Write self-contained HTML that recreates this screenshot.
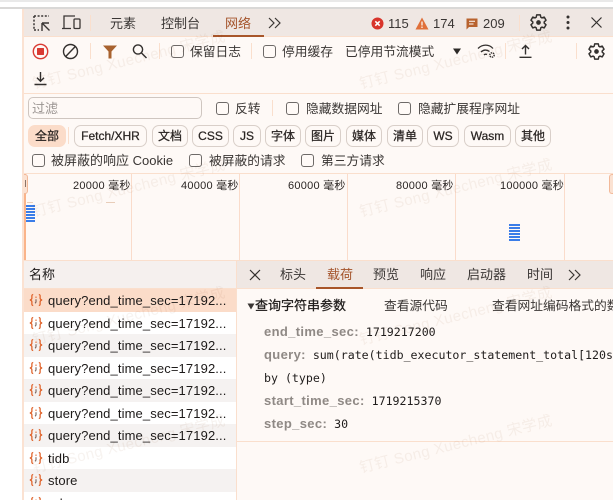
<!DOCTYPE html>
<html style="overflow:hidden"><head><meta charset="utf-8">
<style>
html,body{margin:0;padding:0;background:#fff}
body{width:613px;height:500px;overflow:hidden;position:relative;font-family:"Liberation Sans","Noto Sans CJK SC",sans-serif;color:#2a2523;font-size:13px}
.a{position:absolute;white-space:nowrap}
.t{position:absolute;white-space:nowrap;line-height:16px}
.cb{position:absolute;width:11px;height:11px;border:1px solid #6e6a68;border-radius:3px;background:#fffaf7}
.chip{position:absolute;top:125px;height:20px;border:1px solid #d9cfc9;border-radius:7px;line-height:20px;text-align:center;font-size:12px;color:#2a2523;-webkit-text-stroke:.25px #2a2523}
.ln{position:absolute;background:#fadfcd}
.vl{position:absolute;width:1px;top:174px;height:86px;background:#fadccb}
.row{position:absolute;left:24px;width:212px;height:22.5px}
.row span{position:absolute;left:24px;top:4px;line-height:16px;font-size:13px;color:#1d1a19;letter-spacing:.12px}
.row svg{position:absolute;left:5px;top:4px}
.k{position:absolute;white-space:nowrap;font-family:"DejaVu Sans Mono",monospace;font-size:11.6px;line-height:16px;color:#1f1c1b}
.k b{color:#8f8985;font-family:"Liberation Sans",sans-serif;font-size:13px;letter-spacing:.35px}
.wm{position:absolute;white-space:nowrap;font-size:15px;line-height:18px;color:#f7f3f0;transform:rotate(-14deg);transform-origin:left center;letter-spacing:.4px;mix-blend-mode:multiply}
.bar{position:absolute;background:#3b7de8;height:2px}
.g{fill:none;stroke:#33302e;stroke-width:1.4;stroke-linejoin:round}
.lb{font-size:11px;letter-spacing:.25px;color:#2a2523;top:178px}
</style></head><body>
<div class="a" style="left:0;top:0;width:613px;height:2px;background:#e9e9e9"></div>
<div class="a" style="left:0;top:7px;width:613px;height:2px;background:#d9d8d7"></div>

<!-- main bg -->
<div class="a" style="left:23px;top:9px;width:590px;height:491px;background:#fef9f6"></div>
<div class="a" style="left:22px;top:9px;width:2px;height:491px;background:#fbe2d2"></div>

<!-- tab bar -->
<div class="a" style="left:24px;top:9px;width:589px;height:27px;background:#efe7e3"></div>
<div class="ln" style="left:24px;top:36px;width:589px;height:1px"></div>
<div class="a" style="left:213px;top:35px;width:51px;height:2px;background:#a8562a"></div>
<svg class="a" style="left:30px;top:12px" width="24" height="22" viewBox="0 0 24 22" fill="none" stroke="#3a3634">
<path d="M4 4h15M4 4v14M4 18h5" stroke-width="1.5" stroke-dasharray="2 1.6"/><path d="M12 11v8M12 11h7M12.5 11.5l7 7" stroke-width="1.4"/></svg>
<svg class="a" style="left:61px;top:13px" width="22" height="20" viewBox="0 0 22 20" fill="none" stroke="#3a3634" stroke-width="1.3">
<path d="M3 15V3h11M1 15.5h9"/><rect x="13" y="6" width="6" height="9.5" rx="1"/></svg>
<div class="ln" style="left:90px;top:15px;width:1px;height:16px"></div>
<div class="t" style="left:110px;top:16px;font-size:13px;color:#3a3634">元素</div>
<div class="t" style="left:161px;top:16px;font-size:13px;color:#3a3634">控制台</div>
<div class="t" style="left:225px;top:16px;font-size:13px;color:#a4532a">网络</div>
<svg class="a" style="left:267px;top:16px" width="16" height="14" viewBox="0 0 16 14" fill="none" stroke="#3a3634" stroke-width="1.2"><path d="M2 2l5 5-5 5M8 2l5 5-5 5"/></svg>

<svg class="a" style="left:371px;top:17px" width="13" height="13" viewBox="0 0 13 13"><circle cx="6.5" cy="6.5" r="6" fill="#d8342b"/><path d="M4.3 4.3l4.4 4.4M8.7 4.3l-4.4 4.4" stroke="#fff" stroke-width="1.5"/></svg>
<div class="t" style="left:388px;top:16px;font-size:13px;color:#3a3634">115</div>
<svg class="a" style="left:415px;top:17px" width="14" height="13" viewBox="0 0 14 13"><path d="M7 .5L13.5 12.5H.5z" fill="#e0703a"/><path d="M7 4.5v4M7 9.5v1.5" stroke="#fff" stroke-width="1.2"/></svg>
<div class="t" style="left:433px;top:16px;font-size:13px;color:#3a3634">174</div>
<svg class="a" style="left:466px;top:18px" width="12" height="12" viewBox="0 0 12 12"><path d="M.5 .5h11v8.5H3L.5 11.5z" fill="#b8632f"/><path d="M3 3.3h6M3 6h4.5" stroke="#fff" stroke-width="1"/></svg>
<div class="t" style="left:483px;top:16px;font-size:13px;color:#3a3634">209</div>
<div class="ln" style="left:519px;top:15px;width:1px;height:16px"></div>
<svg class="a" style="left:530px;top:14px" width="17" height="17" viewBox="0 0 16 16"><polygon class="g" points="5.8,3.07 6.34,.79 9.66,.79 10.2,3.07 11.17,3.63 13.41,2.95 15.08,5.84 13.37,7.44 13.37,8.56 15.08,10.16 13.41,13.05 11.17,12.37 10.2,12.93 9.66,15.21 6.34,15.21 5.8,12.93 4.83,12.37 2.59,13.05 .92,10.16 2.63,8.56 2.63,7.44 .92,5.84 2.59,2.95 4.83,3.63"/><circle cx="8" cy="8" r="2.2" fill="#33302e"/></svg>
<svg class="a" style="left:566px;top:15px" width="4" height="15" viewBox="0 0 4 15" fill="#33302e"><circle cx="2" cy="2" r="1.5"/><circle cx="2" cy="7.5" r="1.5"/><circle cx="2" cy="13" r="1.5"/></svg>
<svg class="a" style="left:590px;top:16px" width="13" height="13" viewBox="0 0 13 13" stroke="#33302e" stroke-width="1.2"><path d="M1.5 1.5l10 10M11.5 1.5l-10 10"/></svg>

<!-- toolbar -->
<svg class="a" style="left:32px;top:43px" width="17" height="17" viewBox="0 0 17 17"><circle cx="8.5" cy="8.5" r="7.2" fill="none" stroke="#d93a32" stroke-width="1.4"/><rect x="5" y="5" width="7" height="7" rx=".6" fill="#d93a32"/></svg>
<svg class="a" style="left:62px;top:43px" width="17" height="17" viewBox="0 0 17 17" fill="none" stroke="#33302e" stroke-width="1.4"><circle cx="8.5" cy="8.5" r="7"/><path d="M3.7 13.5l9.6-10"/></svg>
<div class="ln" style="left:90px;top:43px;width:1px;height:16px"></div>
<svg class="a" style="left:103px;top:45px" width="14" height="14" viewBox="0 0 14 14"><path d="M0 .5h14L8.5 6.5V13.5H5.5V6.5z" fill="#a8622f"/></svg>
<svg class="a" style="left:131px;top:43px" width="17" height="17" viewBox="0 0 17 17" fill="none" stroke="#33302e" stroke-width="1.4"><circle cx="7" cy="6.5" r="4.6"/><path d="M10.5 10l5 5"/></svg>
<div class="ln" style="left:159px;top:43px;width:1px;height:16px"></div>
<div class="cb" style="left:171px;top:45px"></div>
<div class="t" style="left:190px;top:44px;font-size:12.75px;color:#3a3634">保留日志</div>
<div class="ln" style="left:251px;top:43px;width:1px;height:16px"></div>
<div class="cb" style="left:263px;top:45px"></div>
<div class="t" style="left:282px;top:44px;font-size:12.75px;color:#3a3634">停用缓存</div>
<div class="t" style="left:345px;top:44px;font-size:12.75px;color:#3a3634">已停用节流模式</div>
<svg class="a" style="left:452px;top:48px" width="10" height="7" viewBox="0 0 10 7"><path d="M1 .5h8L5 6.5z" fill="#2d2a28"/></svg>
<svg class="a" style="left:477px;top:43px" width="19" height="16" viewBox="0 0 19 16" fill="none" stroke="#33302e" stroke-width="1.3"><path d="M1 5.5c4.5-4.5 11-4.5 15 0M4 9c2.5-2.5 6-2.5 8.5-.5M7 12c1-1 2-1 3-.5"/><circle cx="15" cy="12" r="2.2" stroke-dasharray="1.4 .8" stroke-width="1.4"/></svg>
<div class="ln" style="left:505px;top:43px;width:1px;height:16px"></div>
<svg class="a" style="left:518px;top:44px" width="15" height="15" viewBox="0 0 15 15" fill="none" stroke="#33302e" stroke-width="1.4"><path d="M7.5 10.5V1.5M4 5l3.5-3.5L11 5M1.5 13.3h12"/></svg>
<div class="ln" style="left:576px;top:43px;width:1px;height:16px"></div>
<svg class="a" style="left:588px;top:43px" width="17" height="17" viewBox="0 0 16 16"><polygon class="g" points="5.8,3.07 6.34,.79 9.66,.79 10.2,3.07 11.17,3.63 13.41,2.95 15.08,5.84 13.37,7.44 13.37,8.56 15.08,10.16 13.41,13.05 11.17,12.37 10.2,12.93 9.66,15.21 6.34,15.21 5.8,12.93 4.83,12.37 2.59,13.05 .92,10.16 2.63,8.56 2.63,7.44 .92,5.84 2.59,2.95 4.83,3.63"/><circle cx="8" cy="8" r="2.2" fill="#33302e"/></svg>
<svg class="a" style="left:33px;top:71px" width="15" height="15" viewBox="0 0 15 15" fill="none" stroke="#33302e" stroke-width="1.4"><path d="M7.5 1v9M4 6.7l3.5 3.5L11 6.7M1.5 13.5h12"/></svg>
<div class="ln" style="left:24px;top:93px;width:589px;height:1px"></div>

<!-- filter -->
<div class="a" style="left:28px;top:97px;width:172px;height:20px;border:1px solid #cfc6c0;border-radius:5px;background:#fef9f6"></div>
<div class="t" style="left:32px;top:101px;font-size:13px;color:#9a9491">过滤</div>
<div class="cb" style="left:216px;top:102px"></div>
<div class="t" style="left:235px;top:101px;font-size:12.75px;color:#3a3634">反转</div>
<div class="ln" style="left:272px;top:100px;width:1px;height:16px"></div>
<div class="cb" style="left:286px;top:102px"></div>
<div class="t" style="left:306px;top:101px;font-size:12.75px;color:#3a3634">隐藏数据网址</div>
<div class="cb" style="left:398px;top:102px"></div>
<div class="t" style="left:418px;top:101px;font-size:12.75px;color:#3a3634">隐藏扩展程序网址</div>

<div class="chip" style="left:28px;width:36px;background:#fbdcc9;border-color:#fbdcc9">全部</div>
<div class="ln" style="left:68px;top:127px;width:1px;height:17px"></div>
<div class="chip" style="left:74px;width:71px">Fetch/XHR</div>
<div class="chip" style="left:152px;width:34px">文档</div>
<div class="chip" style="left:192px;width:35px">CSS</div>
<div class="chip" style="left:233px;width:26px">JS</div>
<div class="chip" style="left:265px;width:34px">字体</div>
<div class="chip" style="left:305px;width:34px">图片</div>
<div class="chip" style="left:346px;width:34px">媒体</div>
<div class="chip" style="left:387px;width:34px">清单</div>
<div class="chip" style="left:427px;width:30px">WS</div>
<div class="chip" style="left:464px;width:45px">Wasm</div>
<div class="chip" style="left:515px;width:34px">其他</div>

<div class="cb" style="left:32px;top:154px"></div>
<div class="t" style="left:51px;top:153px;font-size:13px;color:#3a3634">被屏蔽的响应 Cookie</div>
<div class="cb" style="left:189px;top:154px"></div>
<div class="t" style="left:209px;top:153px;font-size:12.75px;color:#3a3634">被屏蔽的请求</div>
<div class="cb" style="left:301px;top:154px"></div>
<div class="t" style="left:321px;top:153px;font-size:12.75px;color:#3a3634">第三方请求</div>
<div class="ln" style="left:24px;top:173px;width:589px;height:1px"></div>

<!-- timeline -->
<div class="vl" style="left:131px"></div>
<div class="vl" style="left:239px"></div>
<div class="vl" style="left:347px"></div>
<div class="vl" style="left:455px"></div>
<div class="vl" style="left:564px"></div>
<div class="a" style="left:24px;top:174px;width:2px;height:86px;background:#fab48a"></div>
<div class="a" style="left:24px;top:174px;width:4px;height:20px;background:#fbe2d2;border:1px solid #f2b999;border-left:0;border-radius:0 3px 3px 0;box-sizing:border-box"></div>
<div class="a" style="left:25px;top:180px;width:1px;height:7px;background:#8a7468"></div>
<div class="a" style="left:609px;top:174px;width:4px;height:20px;background:#fbe2d2;border:1px solid #f2b999;border-right:0;border-radius:3px 0 0 3px;box-sizing:border-box"></div>
<div class="t lb" style="left:73px">20000 毫秒</div>
<div class="t lb" style="left:181px">40000 毫秒</div>
<div class="t lb" style="left:288px">60000 毫秒</div>
<div class="t lb" style="left:396px">80000 毫秒</div>
<div class="t lb" style="left:500px">100000 毫秒</div>
<div class="a" style="left:106px;top:202px;width:9px;height:1px;background:#e8cdb9"></div>
<div class="a" style="left:27px;top:202px;width:6px;height:1px;background:#e8cdb9"></div>
<div class="bar" style="left:26px;top:205px;width:9px"></div>
<div class="bar" style="left:26px;top:208px;width:9px"></div>
<div class="bar" style="left:26px;top:211px;width:9px"></div>
<div class="bar" style="left:26px;top:214px;width:9px"></div>
<div class="bar" style="left:26px;top:217px;width:9px"></div>
<div class="bar" style="left:26px;top:220px;width:9px"></div>
<div class="bar" style="left:509px;top:224px;width:11px"></div>
<div class="bar" style="left:509px;top:227px;width:11px"></div>
<div class="bar" style="left:509px;top:230px;width:11px"></div>
<div class="bar" style="left:509px;top:233px;width:11px"></div>
<div class="bar" style="left:509px;top:236px;width:11px"></div>
<div class="bar" style="left:509px;top:239px;width:11px"></div>

<!-- header row -->
<div class="ln" style="left:24px;top:260px;width:589px;height:1px"></div>
<div class="a" style="left:24px;top:261px;width:212px;height:27px;background:#f5f0ee"></div>
<div class="a" style="left:237px;top:261px;width:376px;height:27px;background:#efe7e3"></div>
<div class="ln" style="left:24px;top:288px;width:589px;height:1px"></div>
<div class="ln" style="left:236px;top:261px;width:1px;height:239px"></div>
<div class="t" style="left:29px;top:267px;font-size:13px;color:#1d1a19">名称</div>
<svg class="a" style="left:249px;top:269px" width="12" height="12" viewBox="0 0 12 12" stroke="#33302e" stroke-width="1.2"><path d="M1 1l10 10M11 1L1 11"/></svg>
<div class="t" style="left:280px;top:267px;font-size:13px;color:#3a3634">标头</div>
<div class="t" style="left:327px;top:267px;font-size:13px;color:#a4532a">载荷</div>
<div class="a" style="left:316px;top:287px;width:47px;height:2px;background:#a8562a"></div>
<div class="t" style="left:373px;top:267px;font-size:13px;color:#3a3634">预览</div>
<div class="t" style="left:420px;top:267px;font-size:13px;color:#3a3634">响应</div>
<div class="t" style="left:467px;top:267px;font-size:13px;color:#3a3634">启动器</div>
<div class="t" style="left:527px;top:267px;font-size:13px;color:#3a3634">时间</div>
<svg class="a" style="left:567px;top:268px" width="16" height="14" viewBox="0 0 16 14" fill="none" stroke="#3a3634" stroke-width="1.2"><path d="M2 2l5 5-5 5M8 2l5 5-5 5"/></svg>

<!-- rows -->
<div class="a" style="left:24px;top:289px;width:212px;height:211px;background:#fff"></div>
<div class="row" style="top:289px;background:#fbdcc9"><svg width="14" height="14" viewBox="0 0 14 14"><use href="#ji"/></svg><span>query?end_time_sec=17192...</span></div>
<div class="row" style="top:312px"><svg width="14" height="14" viewBox="0 0 14 14"><use href="#ji"/></svg><span>query?end_time_sec=17192...</span></div>
<div class="row" style="top:334px;background:#f5f2f1"><svg width="14" height="14" viewBox="0 0 14 14"><use href="#ji"/></svg><span>query?end_time_sec=17192...</span></div>
<div class="row" style="top:357px"><svg width="14" height="14" viewBox="0 0 14 14"><use href="#ji"/></svg><span>query?end_time_sec=17192...</span></div>
<div class="row" style="top:379px;background:#f5f2f1"><svg width="14" height="14" viewBox="0 0 14 14"><use href="#ji"/></svg><span>query?end_time_sec=17192...</span></div>
<div class="row" style="top:402px"><svg width="14" height="14" viewBox="0 0 14 14"><use href="#ji"/></svg><span>query?end_time_sec=17192...</span></div>
<div class="row" style="top:424px;background:#f5f2f1"><svg width="14" height="14" viewBox="0 0 14 14"><use href="#ji"/></svg><span>query?end_time_sec=17192...</span></div>
<div class="row" style="top:447px"><svg width="14" height="14" viewBox="0 0 14 14"><use href="#ji"/></svg><span>tidb</span></div>
<div class="row" style="top:469px;background:#f5f2f1"><svg width="14" height="14" viewBox="0 0 14 14"><use href="#ji"/></svg><span>store</span></div>
<div class="row" style="top:492px"><svg width="14" height="14" viewBox="0 0 14 14"><use href="#ji"/></svg><span>rules</span></div>
<svg width="0" height="0" style="position:absolute"><defs><g id="ji" fill="none" stroke="#e0662f" stroke-width="1.3"><path d="M4.2 1.5C2.4 1.5 2.9 3.4 2.9 5S.9 7 .9 7s2 .4 2 2-.5 3.5 1.3 3.5M9.8 1.5c1.8 0 1.3 1.9 1.3 3.5s2 2 2 2-2 .4-2 2 .5 3.5-1.3 3.5"/><path d="M7 6.2v3.2M6 10.2l1-.8" stroke="#6b5147" stroke-width="1"/><path d="M7 3.6v1.2"/></g></defs></svg>

<!-- payload -->
<svg class="a" style="left:247px;top:303px" width="8" height="7" viewBox="0 0 8 7"><path d="M.5 .5h7L4 6.5z" fill="#3a3634"/></svg>
<div class="t" style="left:255px;top:298px;font-size:13px;color:#1d1a19;-webkit-text-stroke:.25px #1d1a19">查询字符串参数</div>
<div class="t" style="left:384px;top:298px;font-size:12.75px;color:#3a3634">查看源代码</div>
<div class="t" style="left:492px;top:298px;font-size:12.75px;color:#3a3634">查看网址编码格式的数据</div>

<div class="k" style="left:264px;top:324px"><b>end_time_sec:</b> 1719217200</div>
<div class="k" style="left:264px;top:347px"><b>query:</b> sum(rate(tidb_executor_statement_total[120s]))</div>
<div class="k" style="left:264px;top:370px">by (type)</div>
<div class="k" style="left:264px;top:393px"><b>start_time_sec:</b> 1719215370</div>
<div class="k" style="left:264px;top:416px"><b>step_sec:</b> 30</div>
<div class="ln" style="left:237px;top:441px;width:376px;height:1px"></div>

<!-- watermarks -->
<div class="wm" style="left:33px;top:76px">钉钉 Song Xuecheng 宋学成</div>
<div class="wm" style="left:33px;top:204px">钉钉 Song Xuecheng 宋学成</div>
<div class="wm" style="left:33px;top:332px">钉钉 Song Xuecheng 宋学成</div>
<div class="wm" style="left:33px;top:460px">钉钉 Song Xuecheng 宋学成</div>
<div class="wm" style="left:360px;top:76px">钉钉 Song Xuecheng 宋学成</div>
<div class="wm" style="left:360px;top:204px">钉钉 Song Xuecheng 宋学成</div>
<div class="wm" style="left:360px;top:332px">钉钉 Song Xuecheng 宋学成</div>
<div class="wm" style="left:360px;top:460px">钉钉 Song Xuecheng 宋学成</div>
</body></html>
